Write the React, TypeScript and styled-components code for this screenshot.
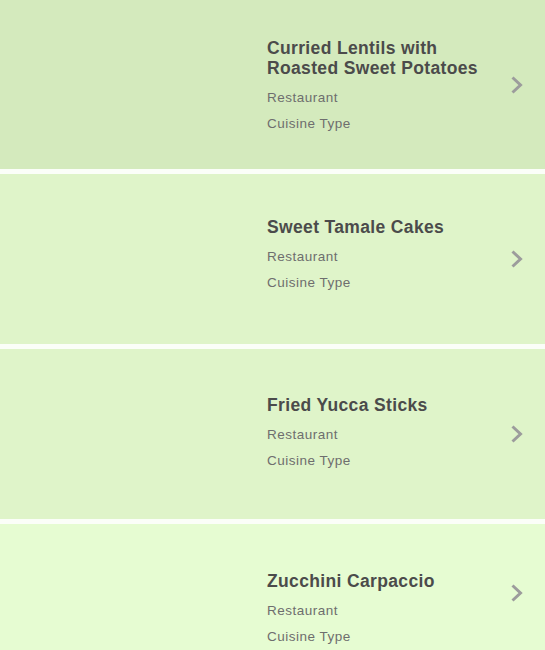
import React from "react";
import styled, { createGlobalStyle } from "styled-components";

const Global = createGlobalStyle`
  html, body { margin: 0; padding: 0; background: #ffffff; }
  body { font-family: "Liberation Sans", Arial, sans-serif; overflow: hidden; }
`;

const List = styled.div`
  display: flex;
  flex-direction: column;
  gap: 5px;
  margin-top: -1px;
  background: #fbfef8;
`;

const Card = styled.div<{ $bg: string }>`
  height: 170px;
  background: ${(p) => p.$bg};
  display: grid;
  grid-template-columns: 267px 1fr 40px;
  align-items: center;
  position: relative;
`;

const Info = styled.div<{ $shift: number }>`
  grid-column: 2;
  display: flex;
  flex-direction: column;
  transform: translateY(${(p) => p.$shift}px);
`;

const Title = styled.div`
  font-size: 17.5px;
  line-height: 19.5px;
  font-weight: 700;
  color: #4b4b4b;
  letter-spacing: 0.35px;
  margin-bottom: 7px;
`;

const Sub = styled.div`
  font-size: 13.5px;
  line-height: 26px;
  color: #6e6e6e;
  letter-spacing: 0.5px;
`;

const Chevron = styled.svg<{ $shift: number }>`
  grid-column: 3;
  width: 14px;
  height: 20px;
  margin-left: 5px;
  transform: translateY(${(p) => p.$shift}px);
`;

type Item = { title: string[]; bg: string; shift: number; content: number };

const items: Item[] = [
  { title: ["Curried Lentils with", "Roasted Sweet Potatoes"], bg: "#d4eabd", shift: 1, content: 4 },
  { title: ["Sweet Tamale Cakes"], bg: "#dff4c9", shift: 0, content: -2.5 },
  { title: ["Fried Yucca Sticks"], bg: "#dff4c9", shift: 0, content: 1 },
  { title: ["Zucchini Carpaccio"], bg: "#e6fcd2", shift: -16, content: 2 },
];

export default function App() {
  return (
    <>
      <Global />
      <List>
        {items.map((it) => (
          <Card key={it.title.join(" ")} $bg={it.bg}>
            <Info $shift={it.content}>
              <Title>
                {it.title.map((l) => (
                  <div key={l}>{l}</div>
                ))}
              </Title>
              <Sub>Restaurant</Sub>
              <Sub>Cuisine Type</Sub>
            </Info>
            <Chevron $shift={it.shift} viewBox="0 0 14 20">
              <path d="M2.5 2.5 L10.5 10 L2.5 17.5" fill="none" stroke="#9c9c9c" strokeWidth="3" />
            </Chevron>
          </Card>
        ))}
      </List>
    </>
  );
}
